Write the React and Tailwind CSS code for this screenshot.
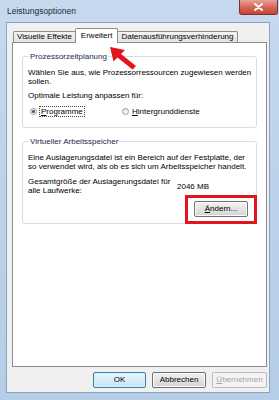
const font = { fontFamily: '"Liberation Sans", Arial, sans-serif' };

const Radio = ({ checked }) => (
  <span className="w-[7px] h-[7px] rounded-full border border-[#8a9aab] bg-gradient-to-br from-[#e0e5ea] to-[#ffffff] flex items-center justify-center shrink-0">
    {checked && <span className="w-[3px] h-[3px] rounded-full bg-[#2a4d7a]" />}
  </span>
);

const Tab = ({ children, active }) =>
  active ? (
    <div className="h-[15px] -mx-[1px] px-[5px] border border-b-0 border-[#898c95] bg-white rounded-t-[2px] flex items-center relative z-10 -mb-[1px]">
      {children}
    </div>
  ) : (
    <div className="h-[11px] px-[3px] border border-b-0 border-[#898c95] bg-gradient-to-b from-[#f2f2f2] to-[#e3e3e3] rounded-t-[2px] flex items-center">
      {children}
    </div>
  );

const Button = ({ children, primary, disabled, className = "" }) => (
  <button
    className={`h-[16px] rounded-[2px] border flex items-center justify-center text-[8px] leading-none ${
      disabled
        ? "border-[#b9bcbf] bg-[#f4f4f4] text-[#a5a5a5]"
        : primary
        ? "border-[#3c7fb1] bg-gradient-to-b from-[#eaf6fd] to-[#c7e3f5] text-black shadow-[inset_0_0_0_1px_#d7eef9]"
        : "border-[#707070] bg-gradient-to-b from-[#f2f2f2] to-[#d4d4d4] text-black shadow-[inset_0_0_0_1px_#fbfbfb]"
    } ${className}`}
  >
    {children}
  </button>
);

export default function App() {
  return (
    <div
      style={font}
      className="w-[279px] h-[400px] bg-gradient-to-b from-[#c6d9ef] via-[#bcd2ea] to-[#b6cde7] flex flex-col text-black overflow-hidden"
    >
      {/* title bar */}
      <div className="h-[22px] flex items-start justify-between pl-[7px]">
        <span className="text-[8.5px] leading-[22px] text-[#1e2a3a]">Leistungsoptionen</span>
        <div className="w-[39px] h-[15px] mr-[1px] rounded-b-[3px] border border-t-0 border-[#7a332b] bg-gradient-to-b from-[#e8a397] via-[#d4675a] to-[#c54536] flex items-center justify-center">
          <svg width="9" height="8" viewBox="0 0 9 8">
            <path d="M1 1 L8 7 M8 1 L1 7" stroke="#fff" strokeWidth="2" strokeLinecap="round" />
          </svg>
        </div>
      </div>

      {/* dialog face */}
      <div className="flex-1 mx-[6px] mb-[7px] mr-[9px] bg-[#f0f0f0] border border-[#8da3bc] flex flex-col pl-[5px] pr-[2px] pt-[5px] pb-[4px]">
        {/* tabs */}
        <div className="flex items-end text-[8px] leading-none pl-[1px]">
          <Tab>Visuelle Effekte</Tab>
          <Tab active>Erweitert</Tab>
          <Tab>Datenausführungsverhinderung</Tab>
        </div>

        {/* panel */}
        <div className="flex-1 bg-white border border-[#898c95] px-[9px] pt-[9px] flex flex-col gap-[9px] text-[8px] leading-[9px] relative whitespace-nowrap">
          <fieldset className="border border-[#d5dfe5] rounded-[3px] px-[5px] pb-[11px]">
            <legend className="ml-[1px] px-[1px] text-[#1c2a4c]">Prozessorzeitplanung</legend>
            <p className="mt-[7px]">
              Wählen Sie aus, wie Prozessorressourcen zugewiesen werden
              <br />
              sollen.
            </p>
            <p className="mt-[5px]">Optimale Leistung anpassen für:</p>
            <div className="mt-[7px] flex items-center">
              <div className="flex items-center gap-[3px] w-[94px] pl-[2px]">
                <Radio checked />
                <span className="outline outline-1 outline-dotted outline-[#444] px-[1px]">
                  <u>P</u>rogramme
                </span>
              </div>
              <div className="flex items-center gap-[3px]">
                <Radio />
                <span>
                  <u>H</u>intergrunddienste
                </span>
              </div>
            </div>
          </fieldset>

          <fieldset className="border border-[#d5dfe5] rounded-[3px] px-[5px] pb-[6px]">
            <legend className="ml-[1px] px-[1px] text-[#1c2a4c]">Virtueller Arbeitsspeicher</legend>
            <p className="mt-[7px]">
              Eine Auslagerungsdatei ist ein Bereich auf der Festplatte, der
              <br />
              so verwendet wird, als ob es sich um Arbeitsspeicher handelt.
            </p>
            <div className="mt-[6px] flex items-center">
              <p className="w-[149px]">
                Gesamtgröße der Auslagerungsdatei für
                <br />
                alle Laufwerke:
              </p>
              <span>2046 MB</span>
            </div>
            <div className="mt-[6px] flex justify-end pr-[3px]">
              <div className="relative">
                <Button className="w-[54px] h-[15px]">
                  <span>
                    <u>Ä</u>ndern...
                  </span>
                </Button>
                <div className="absolute -left-[9px] -top-[6px] -right-[9px] -bottom-[7px] border-[3px] border-[#e3141d]" />
              </div>
            </div>
          </fieldset>

          {/* annotation arrow */}
          <svg className="absolute left-[95px] top-[2px]" width="30" height="26" viewBox="0 0 30 26">
            <path d="M2 2 L17 5 L13 9 L28 21 L24.5 24.5 L9.5 12.5 L5.5 16.5 Z" fill="#e3141d" />
          </svg>
        </div>

        {/* bottom buttons */}
        <div className="flex justify-end gap-[6px] mt-[5px]">
          <Button primary className="w-[53px]">OK</Button>
          <Button className="w-[54px]">Abbrechen</Button>
          <Button disabled className="w-[55px]">
            <span>
              <u>Ü</u>bernehmen
            </span>
          </Button>
        </div>
      </div>
    </div>
  );
}
